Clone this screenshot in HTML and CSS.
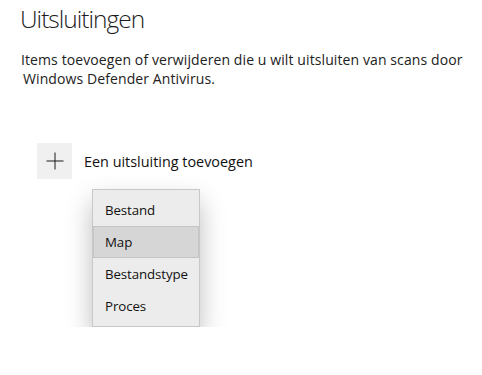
FILE: index.html
```html
<!DOCTYPE html>
<html lang="nl">
<head>
<meta charset="utf-8">
<title>Uitsluitingen</title>
<link rel="stylesheet" href="styles.css">
</head>
<body>
<main class="page">
  <h1 class="title">Uitsluitingen</h1>
  <p class="desc">Items toevoegen of verwijderen die u wilt uitsluiten van scans door<br><span class="indent">Windows Defender Antivirus.</span></p>
  <div class="add-row">
    <span class="add-btn">
      <svg width="18" height="18" viewBox="0 0 18 18" aria-hidden="true"><path d="M9 0.5V17.5M0.5 9H17.5" stroke="#1a1a1a" stroke-width="1" fill="none"/></svg>
    </span>
    <span class="add-label">Een uitsluiting toevoegen</span>
  </div>
  <ul class="menu">
    <li class="menu-item">Bestand</li>
    <li class="menu-item active">Map</li>
    <li class="menu-item">Bestandstype</li>
    <li class="menu-item">Proces</li>
  </ul>
</main>
</body>
</html>
```
FILE: styles.css
```css
html, body {
  margin: 0;
  padding: 0;
  background: #ffffff;
}
body {
  font-family: "Open Sans", "Noto Sans", "Liberation Sans", sans-serif;
  color: #1a1a1a;
}
.page {
  padding: 0 0 0 20px;
}
.title {
  margin: 0;
  padding-top: 2px;
  font-family: "Open Sans", "Noto Sans", sans-serif;
  font-size: 24.5px;
  font-weight: 300;
  line-height: 34px;
  letter-spacing: -1px;
  color: #1c1c1c;
}
.desc {
  margin: 14px 0 0 1px;
  font-size: 14px;
  line-height: 19px;
  color: #222;
  letter-spacing: 0.1px;
}
.indent {
  padding-left: 2px;
}
.add-row {
  display: flex;
  align-items: center;
  margin-top: 55px;
  margin-left: 17px;
  gap: 12px;
}
.add-btn {
  width: 35px;
  height: 36px;
  background: #f0f0f0;
  display: flex;
  align-items: center;
  justify-content: center;
}
.add-label {
  font-size: 14.4px;
  color: #111;
}
.menu {
  list-style: none;
  margin: 10px 0 0 72px;
  padding: 4px 0;
  width: 106px;
  background: #ececec;
  border: 1px solid #c8c8c8;
  box-shadow: 0 12px 24px rgba(0, 0, 0, 0.26);
}
.menu-item {
  height: 32px;
  line-height: 32px;
  padding-left: 12px;
  font-size: 13.3px;
  color: #111;
  letter-spacing: -0.1px;
  box-sizing: border-box;
}
.menu-item.active {
  background: #d6d6d6;
  border: 1px solid #c4c4c4;
  line-height: 30px;
  padding-left: 11px;
}
```
